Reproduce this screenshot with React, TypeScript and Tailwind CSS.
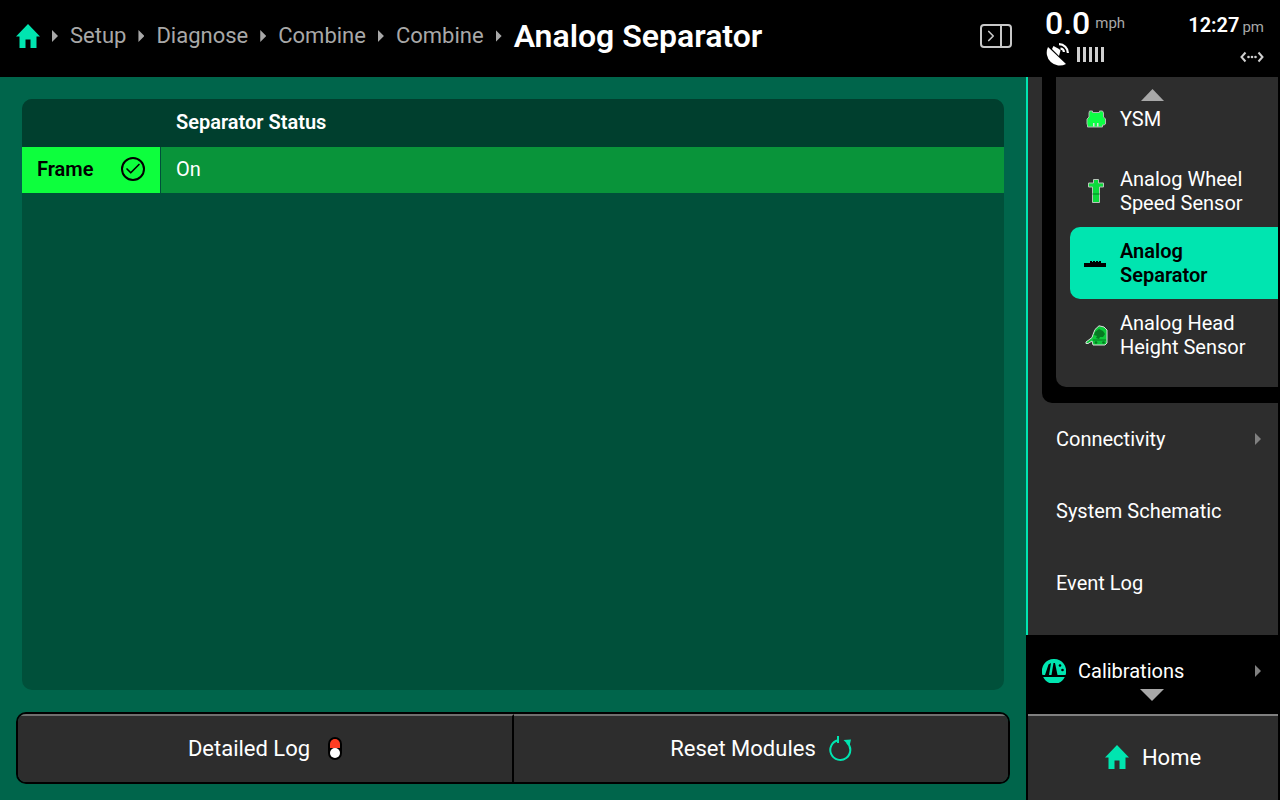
import { ChevronRight, Check } from "lucide-react";
import { type ReactNode } from "react";

const font = "font-['Roboto',sans-serif]";

function Caret({ className = "bg-[#a8a8a8]" }: { className?: string }) {
  return (
    <span
      className={`inline-block h-[12px] w-[6px] shrink-0 [clip-path:polygon(0_0,100%_50%,0_100%)] ${className}`}
    />
  );
}

function HomeIcon({ size }: { size: number }) {
  return (
    <svg width={size} height={size} viewBox="0 0 24 24" fill="#00e5b0">
      <path d="M12 0 L24 12.500 H20.500 V24 H14.500 V15.500 H9.500 V24 H3.500 V12.500 H0 Z" />
    </svg>
  );
}

function Crumb({ label }: { label: string }) {
  return (
    <span className="flex items-center gap-[12px]">
      <Caret />
      <span className="text-[22px] leading-none text-[#a8a8a8]">{label}</span>
    </span>
  );
}

function YsmIcon() {
  return (
    <svg width="20" height="18" viewBox="0 0 20 18">
      <path
        d="M3.500 1h3v1.500h7V1h3l1 2v4l2 2v5l-1.500 1h-1.500v2H1.500v-2H1.500L1 14V9l2-2V3z"
        fill="#0dff45"
        stroke="#aebcb1"
        strokeWidth="1"
      />
      <path d="M7 13h1.500v3.500H7zM11 13h1.500v3.500H11z" fill="#d8e0da" />
    </svg>
  );
}

function WheelIcon() {
  return (
    <svg width="16" height="24" viewBox="0 0 16 24">
      <path
        d="M5.500 .5h5v3.500h5v4h-4v15.500h-7V8h-4V4h5z"
        fill="#0dd93c"
        stroke="#b8c4ba"
        strokeWidth="1"
      />
      <path d="M4.500 15h7" stroke="#067a22" strokeWidth="1" />
    </svg>
  );
}

function SeparatorIcon() {
  return (
    <svg width="24" height="8" viewBox="0 0 24 8">
      <path d="M0 4h6V2h2v1h1V2h2v1h1V2h2v1h1V2h2v2h5v4H0z" fill="#000" />
    </svg>
  );
}

function HeadIcon() {
  return (
    <svg width="23" height="21" viewBox="0 0 23 21">
      <path
        d="M14 .8l5 1.200 3 3v13l-2 2H8l-1-4-4 2.500H1v-1.500l6-4.500 1-3 2-5z"
        fill="#0cc83a"
        stroke="#d8e0da"
        strokeWidth="1"
      />
      <path d="M10 7l4-3 4 2 2 3-2 3h-3l-1 2-3-1 1-2-3-1z" fill="#067a22" />
      <path d="M8 15h13" stroke="#067a22" strokeWidth="1" />
      <circle cx="11" cy="17.500" r="1.300" fill="#067a22" />
      <circle cx="18.500" cy="17.500" r="1.300" fill="#067a22" />
    </svg>
  );
}

function CalibrationsIcon() {
  return (
    <svg width="24" height="24" viewBox="0 0 24 24">
      <path d="M12 0a12 12 0 0 1 11.500 16H.5A12 12 0 0 1 12 0z" fill="#00e5b0" />
      <path d="M3 16 6.500 5.500 9 4 7 16z" fill="#000" />
      <path d="M9.500 16 11.500 4h1.500l2.500 12z" fill="#000" />
      <path d="M1.200 18h21.600A12 12 0 0 1 1.200 18z" fill="#00e5b0" />
      <circle cx="18" cy="6.500" r="1.300" fill="#000" />
      <circle cx="20.500" cy="11" r="1.300" fill="#000" />
    </svg>
  );
}

function DishIcon() {
  return (
    <svg width="24" height="24" viewBox="0 0 24 24" fill="#fff">
      <path d="M3 4 L21 21 A13 13 0 0 1 3 4z" />
      <path d="M7 6 L8.500 3 L14 6 L15.500 7.500 L14 13z" />
      <path d="M14 0a10 10 0 0 1 10 10h-2.200A7.800 7.800 0 0 0 14 2.200z" />
      <path d="M15.500 4.500a4.500 4.500 0 0 1 4.500 4.500h-2.200a2.300 2.300 0 0 0-2.300-2.300z" />
    </svg>
  );
}

function NavItem({ children, caret }: { children: ReactNode; caret?: boolean }) {
  return (
    <div className="flex h-[72px] items-center justify-between pl-[28px] pr-[17px] text-[20px] font-[450] text-white">
      <span>{children}</span>
      {caret ? <Caret className="bg-[#808080]" /> : null}
    </div>
  );
}

function SubItem({
  icon,
  lines,
  active,
}: {
  icon: ReactNode;
  lines: string[];
  active?: boolean;
}) {
  return (
    <div
      className={`ml-[14px] flex h-[72px] items-center rounded-l-[10px] ${
        active ? "bg-[#00e5b0] font-semibold text-black" : "font-[450] text-white"
      }`}
    >
      <span className="flex w-[50px] shrink-0 justify-center pl-[2px]">{icon}</span>
      <span className="text-[20px] leading-[24px]">
        {lines.map((l) => (
          <span key={l} className="block">
            {l}
          </span>
        ))}
      </span>
    </div>
  );
}

function ActionButton({
  label,
  icon,
  className,
}: {
  label: string;
  icon: ReactNode;
  className: string;
}) {
  return (
    <div
      className={`flex flex-1 items-center justify-center gap-[12px] border-t-[2px] border-t-[#6f6f6f] bg-[#2d2d2d] pb-[2px] text-[22px] font-[450] text-white ${className}`}
    >
      <span>{label}</span>
      {icon}
    </div>
  );
}

export default function App() {
  return (
    <div className={`flex h-[800px] w-[1280px] flex-col overflow-hidden bg-[#00654b] ${font}`}>
      <header className="flex h-[77px] shrink-0 items-center bg-black">
        <div className="flex items-center gap-[12px] pb-[5px] pl-[16px]">
          <HomeIcon size={24} />
          <Crumb label="Setup" />
          <Crumb label="Diagnose" />
          <Crumb label="Combine" />
          <Crumb label="Combine" />
          <span className="flex items-center gap-[12px]">
            <Caret />
            <span className="text-[32px] font-semibold leading-none text-white">Analog Separator</span>
          </span>
        </div>
        <div className="ml-auto flex h-full items-center">
          <div className="mb-[5px] mr-[33px] flex h-[24px] w-[32px] rounded-[4px] border-2 border-[#c8c8c8]">
            <span className="flex w-[20px] items-center justify-center border-r-2 border-[#c8c8c8]">
              <ChevronRight size={18} strokeWidth={2.2} className="shrink-0 text-[#c8c8c8]" />
            </span>
          </div>
          <div className="flex w-[128px] flex-col pb-[4px]">
            <div className="flex items-start gap-[5px]">
              <span className="text-[32px] font-medium leading-[32px] text-white">0.0</span>
              <span className="pt-[7px] text-[15px] leading-[18px] text-[#a8a8a8]">mph</span>
            </div>
            <div className="mt-[4px] flex items-center gap-[8px]">
              <DishIcon />
              <span className="flex gap-[3px]">
                {[0, 1, 2, 3, 4].map((i) => (
                  <span key={i} className="h-[15px] w-[3px] bg-[#d0d0d0]" />
                ))}
              </span>
            </div>
          </div>
          <div className="flex w-[107px] flex-col items-end pr-[16px]">
            <div className="-mt-[5px] flex items-baseline gap-[3px]">
              <span className="text-[20px] font-semibold text-white">12:27</span>
              <span className="text-[15px] text-[#a8a8a8]">pm</span>
            </div>
            <svg width="24" height="12" viewBox="0 0 24 12" className="mt-[11px]" fill="none" stroke="#d0d0d0" strokeWidth="2">
              <path d="M5.500 1.500 1.500 6l4 4.500M18.500 1.500l4 4.500-4 4.500" />
              <circle cx="8.500" cy="6" r="1.300" fill="#d0d0d0" stroke="none" />
              <circle cx="12" cy="6" r="1.300" fill="#d0d0d0" stroke="none" />
              <circle cx="15.500" cy="6" r="1.300" fill="#d0d0d0" stroke="none" />
            </svg>
          </div>
        </div>
      </header>

      <div className="flex min-h-0 flex-1">
        <main className="flex w-[1026px] shrink-0 flex-col px-[16px]">
          <section className="mx-[6px] mt-[22px] flex h-[591px] flex-col overflow-hidden rounded-[10px] bg-[#00503a]">
            <div className="flex h-[48px] shrink-0 items-center bg-[#003f2e] pb-[2px] pl-[154px] text-[20px] font-semibold text-white">
              Separator Status
            </div>
            <div className="flex h-[46px] shrink-0">
              <div className="flex w-[139px] shrink-0 items-center justify-between border-r-[1px] border-[#00503a] bg-[#0dff3d] pb-[2px] pl-[15px] pr-[15px] text-[20px] font-semibold text-black">
                <span>Frame</span>
                <span className="flex h-[24px] w-[24px] items-center justify-center rounded-full border-2 border-black">
                  <Check size={18} strokeWidth={2.2} className="shrink-0" />
                </span>
              </div>
              <div className="flex flex-1 items-center bg-[#09943a] pb-[2px] pl-[15px] text-[20px] text-white">On</div>
            </div>
          </section>
          <div className="mt-[22px] flex h-[72px] overflow-hidden rounded-[10px] border-[2px] border-black">
            <ActionButton
              label="Detailed Log"
              className="border-r-[2px] border-r-black"
              icon={
                <span className="ml-[6px] flex h-[23px] w-[14px] flex-col items-center overflow-hidden rounded-full bg-black pt-[2px]">
                  <span className="h-[9px] w-[10px] rounded-t-full bg-[#ff3d22]" />
                  <span className="h-[10px] w-[10px] rounded-full bg-white" />
                </span>
              }
            />
            <ActionButton
              label="Reset Modules"
              className=""
              icon={
                <svg width="24" height="25" viewBox="0 0 24 25" fill="none" stroke="#00e5b0" strokeWidth="2">
                  <path d="M10 4.200A10 10 0 1 0 19 6.500" />
                  <path d="M10 0v7" />
                  <path d="M15.500 4 23 3.500 21.500 10z" fill="#00e5b0" stroke="none" />
                </svg>
              }
            />
          </div>
        </main>

        <aside className="flex w-[254px] shrink-0 flex-col border-r-[2px] border-black bg-black">
          <div className="flex h-[558px] flex-col border-l-[2px] border-[#00e5b0] bg-[#2d2d2d]">
            <div className="ml-[14px] rounded-bl-[10px] bg-black pb-[16px] pl-[14px]">
              <div className="relative rounded-bl-[10px] bg-[#2d2d2d] pb-[16px] pt-[6px]">
                <span className="absolute left-[85px] top-[12px] h-[12px] w-[23px] bg-[#a8a8a8] [clip-path:polygon(50%_0,100%_100%,0_100%)]" />
                <SubItem icon={<YsmIcon />} lines={["YSM"]} />
                <SubItem icon={<WheelIcon />} lines={["Analog Wheel", "Speed Sensor"]} />
                <SubItem icon={<SeparatorIcon />} lines={["Analog", "Separator"]} active />
                <SubItem icon={<HeadIcon />} lines={["Analog Head", "Height Sensor"]} />
              </div>
            </div>
            <NavItem caret>Connectivity</NavItem>
            <NavItem>System Schematic</NavItem>
            <NavItem>Event Log</NavItem>
          </div>
          <div className="relative flex h-[79px] shrink-0 items-start gap-[12px] bg-black pl-[16px] pt-[24px]">
            <CalibrationsIcon />
            <span className="text-[20px] font-[450] leading-[24px] text-white">Calibrations</span>
            <Caret className="absolute right-[17px] top-[30px] bg-[#808080]" />
            <span className="absolute left-[114px] top-[54px] h-[12px] w-[24px] bg-[#a8a8a8] [clip-path:polygon(0_0,100%_0,50%_100%)]" />
          </div>
          <div className="ml-[2px] flex flex-1 items-center justify-center gap-[13px] border-t-[2px] border-[#808080] bg-[#2d2d2d] pb-[2px] text-[22px] font-[450] text-white">
            <HomeIcon size={24} />
            <span>Home</span>
          </div>
        </aside>
      </div>
    </div>
  );
}
